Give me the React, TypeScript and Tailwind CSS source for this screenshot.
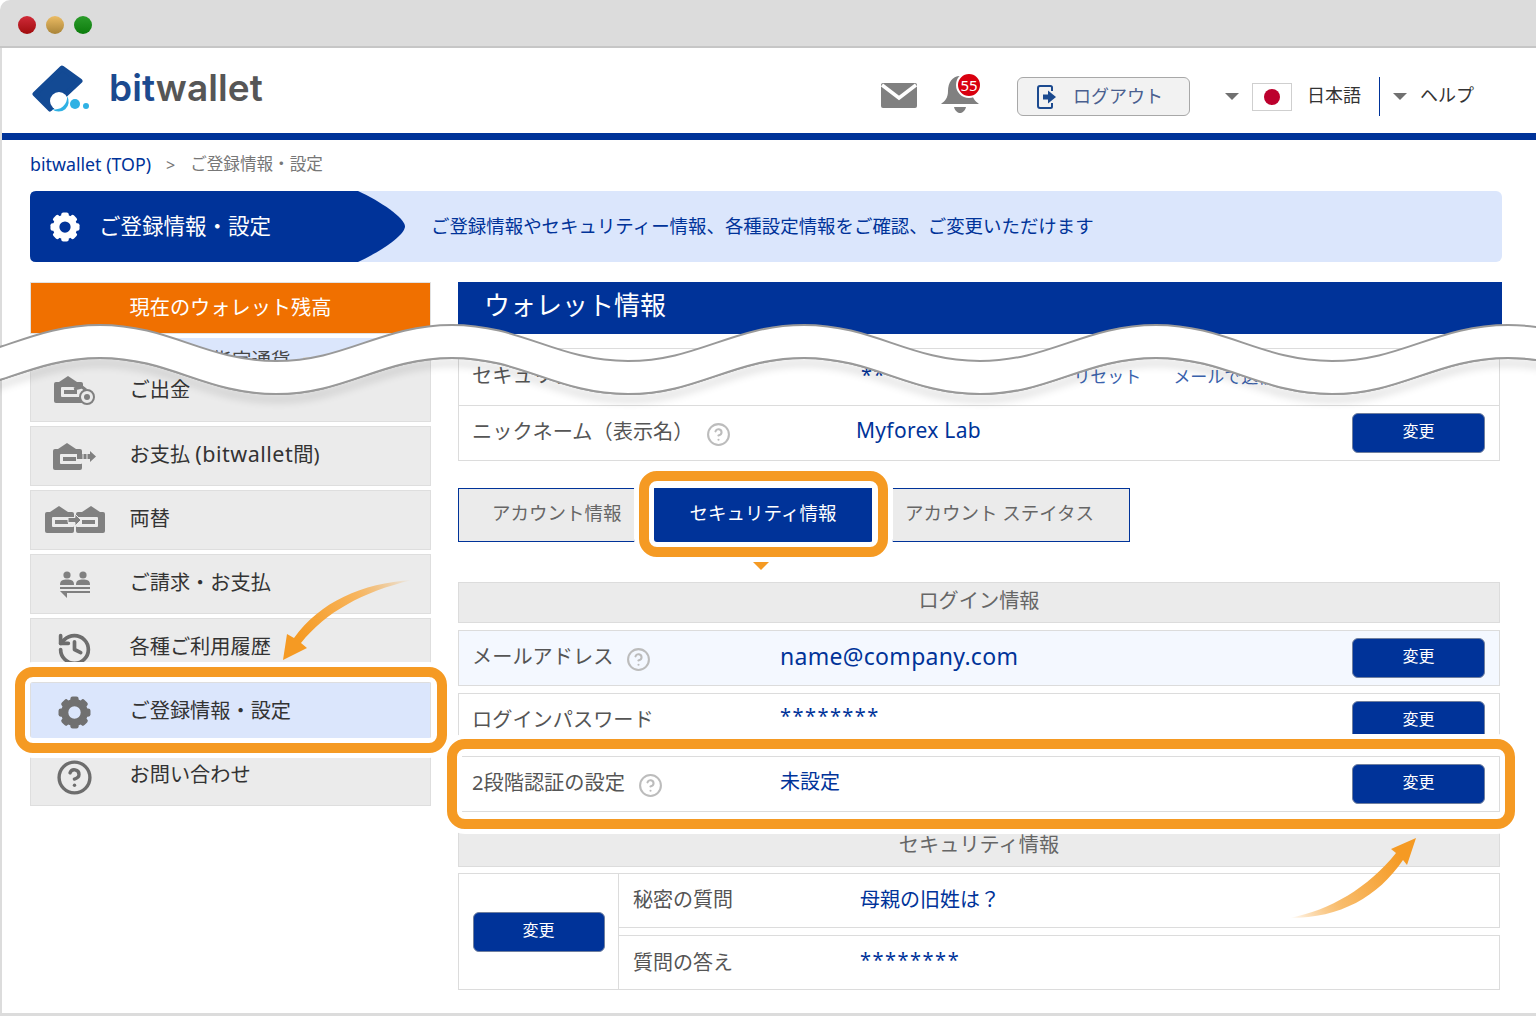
import { CircleHelp, History } from "lucide-react";
import type { ReactNode } from "react";

const knots: [number, number][] = [];
for (let i = 0; i < 11; i++) knots.push([-76 + 176 * i, i % 2 === 0 ? 36 : 0]);

function forward(dy: number) {
  let d = `M${knots[0][0]} ${knots[0][1] + dy}`;
  for (let i = 1; i < knots.length; i++) {
    const [ax, ay] = knots[i - 1];
    const [bx, by] = knots[i];
    d += ` C${ax + 70} ${ay + dy} ${ax + 105} ${by + dy} ${bx} ${by + dy}`;
  }
  return d;
}
function backward(dy: number) {
  let d = "";
  const last = knots[knots.length - 1];
  d += ` L${last[0]} ${last[1] + dy}`;
  for (let i = knots.length - 1; i > 0; i--) {
    const [ax, ay] = knots[i - 1];
    const [bx, by] = knots[i];
    d += ` C${ax + 105} ${by + dy} ${ax + 70} ${ay + dy} ${ax} ${ay + dy}`;
  }
  return d + " Z";
}

function Gear({ size, className }: { size: number; className?: string }) {
  const teeth = [0, 45, 90, 135, 180, 225, 270, 315];
  return (
    <svg width={size} height={size} viewBox="0 0 32 32" className={className} fill="currentColor">
      <circle cx="16" cy="16" r="9.5" fill="none" stroke="currentColor" strokeWidth="7" />
      {teeth.map((a) => (
        <rect key={a} x="12" y="0.5" width="8" height="7" rx="2.2" transform={`rotate(${a} 16 16)`} />
      ))}
    </svg>
  );
}

function Wallet({ x = 0, y = 0, flip = false }: { x?: number; y?: number; flip?: boolean }) {
  return (
    <g transform={`translate(${x} ${y})${flip ? " translate(29 0) scale(-1 1)" : ""}`} fill="#808080">
      <path d="M14 0 L23 6 L5 6 Z" />
      <rect x="0" y="6" width="29" height="21" rx="2" />
      <rect x="7" y="11" width="22" height="10" rx="1" fill="#ebebeb" />
      <rect x="10" y="14" width="13" height="4" fill="#808080" />
    </g>
  );
}

function WithdrawIcon() {
  return (
    <svg width="42" height="30" viewBox="0 0 42 30">
      <Wallet x={0} y={0} />
      <circle cx="33" cy="21" r="7" fill="#ebebeb" stroke="#808080" strokeWidth="2" />
      <circle cx="33" cy="21" r="3" fill="#808080" />
      <path d="M20 13 L28 11 L32 14" fill="none" stroke="#808080" strokeWidth="3" />
    </svg>
  );
}
function PayIcon() {
  return (
    <svg width="44" height="31" viewBox="0 0 44 31">
      <Wallet x={0} y={2} />
      <path d="M24 13 H37 V10 L43 15.5 L37 21 V18 H24 Z" fill="#808080" />
      <path d="M30 12 V19 M34 12 V19" stroke="#ebebeb" strokeWidth="1" />
    </svg>
  );
}
function ExchangeIcon() {
  return (
    <svg width="60" height="30" viewBox="0 0 60 30">
      <Wallet x={0} y={1} />
      <Wallet x={31} y={1} flip />
      <path d="M23 12.5 H30 V9 L36 15 L30 21 V17.5 H23 Z" fill="#808080" stroke="#ebebeb" strokeWidth="1" />
    </svg>
  );
}
function BillIcon() {
  return (
    <svg width="32" height="27" viewBox="0 0 32 27" fill="#808080">
      <circle cx="8" cy="4" r="3.6" />
      <path d="M1 14 C1 9 4 8.5 8 8.5 C12 8.5 15 9 15 14 Z" />
      <circle cx="24" cy="4" r="3.6" />
      <path d="M17 14 C17 9 20 8.5 24 8.5 C28 8.5 31 9 31 14 Z" />
      <rect x="1" y="16" width="30" height="2" />
      <path d="M31 20 V22 H8 V27 L1 20 Z" />
    </svg>
  );
}

function Triangle() {
  return <div className="w-0 h-0 border-l-[7px] border-r-[7px] border-t-[7px] border-l-transparent border-r-transparent border-t-[#707070]" />;
}

function SideItem({ icon, label, active, tall }: { icon: ReactNode; label: ReactNode; active?: boolean; tall?: boolean }) {
  return (
    <div
      className={`flex items-center border border-[#dedede] text-[20.2px] text-[#333] ${tall ? "h-[65px] pt-[3px]" : "h-[60px]"} ${active ? "bg-[#dbe6fc]" : "bg-[#ebebeb]"}`}
    >
      <div className="w-[87px] flex items-center justify-center shrink-0">{icon}</div>
      <span className="ml-[11.5px] mb-[3.5px]">{label}</span>
    </div>
  );
}

function ChangeButton() {
  return (
    <button className="w-[133px] h-[40px] rounded-[6px] bg-[#003399] border border-[#6f7f9f] text-white text-[16px] pb-[4px] shrink-0">
      変更
    </button>
  );
}

function Help() {
  return <CircleHelp size={25} strokeWidth={2} className="text-[#bcbcbc] ml-[13px] mt-[6px]" />;
}

function Row({
  label,
  help,
  value,
  labelWidth = "w-[308px]",
  tone = "bg-white",
  valueClass = "text-[20px] pb-[5px]",
}: {
  label: string;
  help?: boolean;
  value: string;
  labelWidth?: string;
  tone?: string;
  valueClass?: string;
}) {
  return (
    <div className={`h-[56px] flex items-center border border-[#dcdcdc] pl-[13px] pr-[14px] ${tone}`}>
      <div className={`${labelWidth} flex items-center text-[20.2px] text-[#555] shrink-0 pb-[4px]`}>
        <span>{label}</span>
        {help && <Help />}
      </div>
      <span className={`text-[#003399] ${valueClass}`}>{value}</span>
      <div className="ml-auto">
        <ChangeButton />
      </div>
    </div>
  );
}

export default function App() {
  return (
    <div className="relative w-[1536px] h-[1016px] overflow-hidden bg-white text-[#444] font-['Noto_Sans','Noto_Sans_CJK_JP',sans-serif]">
      {/* browser chrome */}
      <div className="h-[48px] bg-[#dcdcdc] border-b-2 border-[#c6c6c6] rounded-tl-[10px] flex items-center gap-[10px] pl-[18px] pt-[4px]">
        <div className="w-[18px] h-[18px] rounded-full bg-linear-to-b from-[#d02a38] to-[#a00a0a]" />
        <div className="w-[18px] h-[18px] rounded-full bg-linear-to-b from-[#ecbc64] to-[#a98438]" />
        <div className="w-[18px] h-[18px] rounded-full bg-linear-to-b from-[#2a9c2a] to-[#0a7c0a]" />
      </div>

      <div className="h-[968px] border-l-2 border-b-[3px] border-[#dcdcdc]">
        {/* header */}
        <header className="h-[85px] flex items-center">
          <div className="flex items-center ml-[30px] mb-[7px]">
            <svg width="60" height="50" viewBox="0 0 60 50" className="mt-[6px]">
              <path d="M30 3 L3 29 L18 44 L48 16 Z" fill="#134a94" stroke="#134a94" strokeWidth="5" strokeLinejoin="round" />
              <circle cx="27" cy="36" r="9" fill="#fff" />
              <path d="M20 44 A10 10 0 0 0 35 31 A12 12 0 0 1 20 44 Z" fill="#2fb1e4" />
              <circle cx="43" cy="39" r="5" fill="#2fb1e4" />
              <circle cx="54" cy="41" r="3" fill="#2fb1e4" />
            </svg>
            <div className="ml-[17px] text-[37px] font-semibold leading-none tracking-[0.1px] font-['Inter',sans-serif]">
              <span className="text-[#1c4a8f]">bit</span>
              <span className="text-[#565656]">wallet</span>
            </div>
          </div>
          <div className="ml-auto flex items-center pr-[62px] mt-[12px]">
            <svg width="36" height="25" viewBox="0 0 36 25" className="mb-[3px]">
              <rect x="0" y="0" width="36" height="25" rx="2" fill="#808080" />
              <path d="M1 2 L18 15 L35 2" fill="none" stroke="#fff" strokeWidth="3.5" />
            </svg>
            <div className="relative w-[40px] h-[40px] ml-[23px] mb-[7px]">
              <svg width="40" height="40" viewBox="0 0 40 40" fill="#808080">
                <path d="M20 3 C12 3 8 10 8 18 C8 25 5 28 1 31 L39 31 C35 28 32 25 32 18 C32 10 28 3 20 3 Z" />
                <path d="M14 34 L26 34 C25 38 22 40 20 40 C18 40 15 38 14 34 Z" />
              </svg>
              <div className="absolute left-[16px] top-[-1px] w-[26px] h-[26px] rounded-full bg-[#d9000f] border-2 border-white flex items-center justify-center text-white text-[15px] leading-none">
                55
              </div>
            </div>
            <button className="ml-[37px] w-[173px] h-[39px] rounded-[6px] bg-[#f2f2f2] border border-[#a8a8a8] flex items-center pl-[19px] text-[18px] text-[#4a5f8f]">
              <svg width="20" height="24" viewBox="0 0 20 24">
                <path d="M15 6 V2.5 Q15 1 13.5 1 H3 Q1 1 1 3 V21 Q1 23 3 23 H13.5 Q15 23 15 21.5 V18" fill="none" stroke="#1c4a8f" strokeWidth="2" />
                <path d="M6 9.5 H11 V5.5 L19 12 L11 18.5 V14.5 H6 Z" fill="#1c4a8f" />
              </svg>
              <span className="ml-[16px]">ログアウト</span>
            </button>
            <div className="ml-[35px]">
              <Triangle />
            </div>
            <div className="ml-[13px] w-[40px] h-[28px] border border-[#cfcfcf] flex items-center justify-center">
              <div className="w-[16px] h-[16px] rounded-full bg-[#bc002d]" />
            </div>
            <span className="ml-[15px] text-[18px] text-[#333] mb-[2px]">日本語</span>
            <div className="ml-[18px] w-px h-[39px] bg-[#003399]" />
            <div className="ml-[13px]">
              <Triangle />
            </div>
            <span className="ml-[13px] text-[18px] text-[#333] mb-[2px]">ヘルプ</span>
          </div>
        </header>
        <div className="h-[7px] bg-[#003399]" />

        {/* breadcrumb */}
        <nav className="h-[51px] flex items-center pl-[28px] pb-[2px] text-[#777]">
          <span className="text-[17.8px] text-[#003399]">bitwallet (TOP)</span>
          <span className="ml-[15px] text-[16px]">&gt;</span>
          <span className="ml-[15px] text-[16.6px]">ご登録情報・設定</span>
        </nav>

        {/* banner */}
        <div className="ml-[28px] w-[1472px] h-[71px] rounded-[6px] bg-[#dbe6fc] flex items-center">
          <div className="w-[375px] h-full bg-[#003399] flex items-center pl-[20px] text-white [clip-path:path('M6_0H328C350_10_375_27_375_35.5C375_44_350_61_328_71H6Q0_71_0_65V6Q0_0_6_0Z')]">
            <Gear size={30} />
            <span className="ml-[19px] text-[21.5px]">ご登録情報・設定</span>
          </div>
          <span className="ml-[26px] text-[18.45px] text-[#003399] mb-[2px]">
            ご登録情報やセキュリティー情報、各種設定情報をご確認、ご変更いただけます
          </span>
        </div>

        <div className="flex pt-[20px]">
          {/* sidebar */}
          <aside className="ml-[28px] w-[401px] shrink-0">
            <div className="h-[52px] bg-[#f07000] border border-[#e2e2e2] flex items-center justify-center text-white text-[20.2px] pb-[2px]">
              現在のウォレット残高
            </div>
            <div className="mt-[4px] h-[19px] bg-[#dbe6fc]">
              <span className="relative z-10 block ml-[163px] w-[110px] h-[24px] bg-[#dbe6fc] text-[19.5px] leading-[43px] text-[#444] whitespace-nowrap">
                ご指定通貨
              </span>
            </div>
            <div className="flex flex-col gap-[4px]">
              <SideItem tall icon={<WithdrawIcon />} label="ご出金" />
              <SideItem
                icon={<PayIcon />}
                label={
                  <>
                    お支払 <span className="text-[21.5px] tracking-[0.5px]">(bitwallet</span>間)
                  </>
                }
              />
              <SideItem icon={<ExchangeIcon />} label="両替" />
              <SideItem icon={<BillIcon />} label="ご請求・お支払" />
              <SideItem icon={<History size={37} strokeWidth={2.4} className="text-[#6d6d6d] mt-[2px]" />} label="各種ご利用履歴" />
              <SideItem active icon={<Gear size={33} className="text-[#707070]" />} label="ご登録情報・設定" />
              <SideItem icon={<CircleHelp size={37} strokeWidth={2.2} className="text-[#6d6d6d] mt-[2px]" />} label="お問い合わせ" />
            </div>
          </aside>

          {/* main */}
          <main className="ml-[27px] w-[1044px] shrink-0">
            <div className="h-[52px] bg-[#003399] flex items-center pl-[26px] text-white text-[26px] pb-[6px]">ウォレット情報</div>
            <div className="w-[1042px] mt-[14px]">
              <div className="h-[58px] flex items-center border border-[#dcdcdc] pl-[13px] pb-[4px]">
                <div className="w-[389px] text-[20.2px] text-[#555] shrink-0">セキュリティコード</div>
                <span className="text-[20px] text-[#003399] tracking-[1.4px]">********</span>
                <span className="ml-[113px] text-[17px] text-[#3a62ad] mt-[3px]">リセット</span>
                <span className="ml-[32px] text-[17px] text-[#3a62ad] mt-[3px]">メールで送信</span>
              </div>
              <div className="h-[55px] flex items-center border border-t-0 border-[#dcdcdc] pl-[13px] pr-[14px]">
                <div className="w-[384px] flex items-center text-[20.2px] text-[#555] shrink-0 pb-[4px]">
                  <span>ニックネーム（表示名）</span>
                  <Help />
                </div>
                <span className="text-[21px] text-[#003399] tracking-[0.3px] mb-[5px]">Myforex Lab</span>
                <div className="ml-auto">
                  <ChangeButton />
                </div>
              </div>
            </div>

            {/* tabs */}
            <div className="mt-[27px] flex h-[54px] text-[18.5px]">
              <div className="w-[177px] bg-[#ebebeb] border border-[#003399] flex items-center pl-[33px] text-[#666] pb-[5px]">アカウント情報</div>
              <div className="ml-[19px] w-[218px] bg-[#003399] flex items-center justify-center text-white pb-[5px]">セキュリティ情報</div>
              <div className="ml-[20px] w-[238px] bg-[#ebebeb] border border-[#003399] flex items-center pl-[12px] text-[#666] pb-[5px]">アカウント ステイタス</div>
            </div>

            {/* login info */}
            <div className="w-[1042px] mt-[40px]">
              <div className="h-[41px] bg-[#ebebeb] border border-[#dcdcdc] flex items-center justify-center text-[20.2px] text-[#666] pb-[5px]">ログイン情報</div>
              <div className="mt-[7px] flex flex-col gap-[7px]">
                <Row label="メールアドレス" help value="name@company.com" tone="bg-[#f4f8ff]" valueClass="text-[23px] tracking-[0.3px] pb-[3px]" />
                <Row label="ログインパスワード" value="********" valueClass="text-[20px] tracking-[1.45px] pb-[5px] mb-[6px]" />
                <Row label="2段階認証の設定" help value="未設定" />
              </div>
              <div className="mt-[14px] h-[41px] bg-[#ebebeb] border border-[#dcdcdc] flex items-center justify-center text-[20.2px] text-[#666] pb-[5px]">セキュリティ情報</div>
              <div className="mt-[6px] flex border-l border-[#dcdcdc]">
                <div className="w-[160px] shrink-0 border-t border-b border-r border-[#dcdcdc] flex items-center justify-center">
                  <button className="w-[132px] h-[40px] rounded-[6px] bg-[#003399] border border-[#6f7f9f] text-white text-[16px] pb-[4px]">変更</button>
                </div>
                <div className="flex-1 flex flex-col gap-[7px]">
                  <div className="h-[55px] flex items-center border-t border-b border-r border-[#dcdcdc] pl-[14px] pb-[2px]">
                    <span className="w-[227px] text-[20px] text-[#555]">秘密の質問</span>
                    <span className="text-[20px] text-[#003399]">母親の旧姓は？</span>
                  </div>
                  <div className="h-[55px] flex items-center border-t border-b border-r border-[#dcdcdc] pl-[14px]">
                    <span className="w-[227px] text-[20px] text-[#555]">質問の答え</span>
                    <span className="text-[20px] text-[#003399] tracking-[1.5px] mb-[5px]">********</span>
                  </div>
                </div>
              </div>
            </div>
          </main>
        </div>
      </div>

      {/* annotation overlays */}
      <div className="absolute z-20 left-[753px] top-[562px] w-0 h-0 border-l-[8px] border-r-[8px] border-t-[8px] border-l-transparent border-r-transparent border-t-[#f59a23]" />
      <div className="absolute z-20 left-[15px] top-[667px] w-[432px] h-[86px] rounded-[18px] border-[10px] border-[#f59a23] shadow-[0_0_0_5px_#fff,inset_0_0_0_5px_#fff]" />
      <div className="absolute z-20 left-[639px] top-[471px] w-[249px] h-[86px] rounded-[18px] border-[10px] border-[#f59a23] shadow-[0_0_0_5px_#fff,inset_0_0_0_5px_#fff]" />
      <div className="absolute z-20 left-[447px] top-[739px] w-[1068px] h-[90px] rounded-[18px] border-[10px] border-[#f59a23] shadow-[0_0_0_5px_#fff,inset_0_0_0_5px_#fff]" />

      <svg className="absolute z-20 left-0 top-0 pointer-events-none" width="1536" height="1016" viewBox="0 0 1536 1016">
        <defs>
          <linearGradient id="arrowA" gradientUnits="userSpaceOnUse" x1="300" y1="640" x2="412" y2="580">
            <stop offset="0" stopColor="#f59a23" />
            <stop offset="0.55" stopColor="#f7b45c" />
            <stop offset="1" stopColor="#f59a23" stopOpacity="0" />
          </linearGradient>
          <linearGradient id="arrowB" gradientUnits="userSpaceOnUse" x1="1400" y1="855" x2="1290" y2="918">
            <stop offset="0" stopColor="#f59a23" />
            <stop offset="0.6" stopColor="#f8bc6c" />
            <stop offset="1" stopColor="#f59a23" stopOpacity="0" />
          </linearGradient>
        </defs>
        <path d="M412 580 C362 583 320 602 294 638 L287 634 L283 660 L307 648 L301 643 C326 612 362 592 412 580 Z" fill="url(#arrowA)" />
        <path d="M1290 918 C1330 910 1368 888 1396 853 L1391 849 L1416 838 L1407 865 L1403 860 C1378 897 1340 918 1290 918 Z" fill="url(#arrowB)" />

        {/* torn-page wave */}
        <path d={forward(358)} fill="none" stroke="#999" strokeWidth="2" className="drop-shadow-[0_5px_4px_rgba(0,0,0,0.4)]" />
        <path d={forward(325) + backward(358)} fill="#fff" />
        <path d={forward(325)} fill="none" stroke="#999" strokeWidth="2" />
        <path d={forward(358)} fill="none" stroke="#999" strokeWidth="2" />
      </svg>
    </div>
  );
}
